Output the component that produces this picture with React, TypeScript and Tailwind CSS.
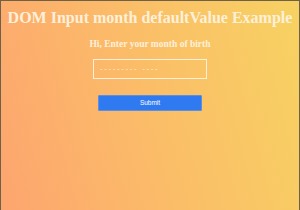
export default function App() {
  return (
    <div className="w-[300px] h-[210px] overflow-hidden border-t border-x border-[#6f6148] bg-[linear-gradient(75deg,#fda56f_0%,#fbbd68_50%,#f7d262_100%)] flex flex-col items-center font-['Liberation_Serif',serif]">
      <h1 className="mt-[7px] text-[16px] leading-[20px] font-bold text-[#fdf0da] whitespace-nowrap">
        DOM Input month defaultValue Example
      </h1>
      <h3 className="mt-[10px] text-[9.5px] leading-[12px] font-bold text-[#fdf0da] whitespace-nowrap">
        Hi, Enter your month of birth
      </h3>
      <div className="mt-[9px] w-[114px] h-[20px] border border-[#fdf0da] flex items-center pl-[6px]">
        <span className="font-['Liberation_Sans',sans-serif] text-[8px] tracking-[1.6px] text-[#fdf0da]">
          --------- ----
        </span>
      </div>
      <button className="mt-[16px] w-[104px] h-[16px] rounded-[1px] bg-[#2f7af0] border border-[#5b8fe0] text-white text-[6.5px] font-['Liberation_Sans',sans-serif] flex items-center justify-center">
        Submit
      </button>
    </div>
  );
}
